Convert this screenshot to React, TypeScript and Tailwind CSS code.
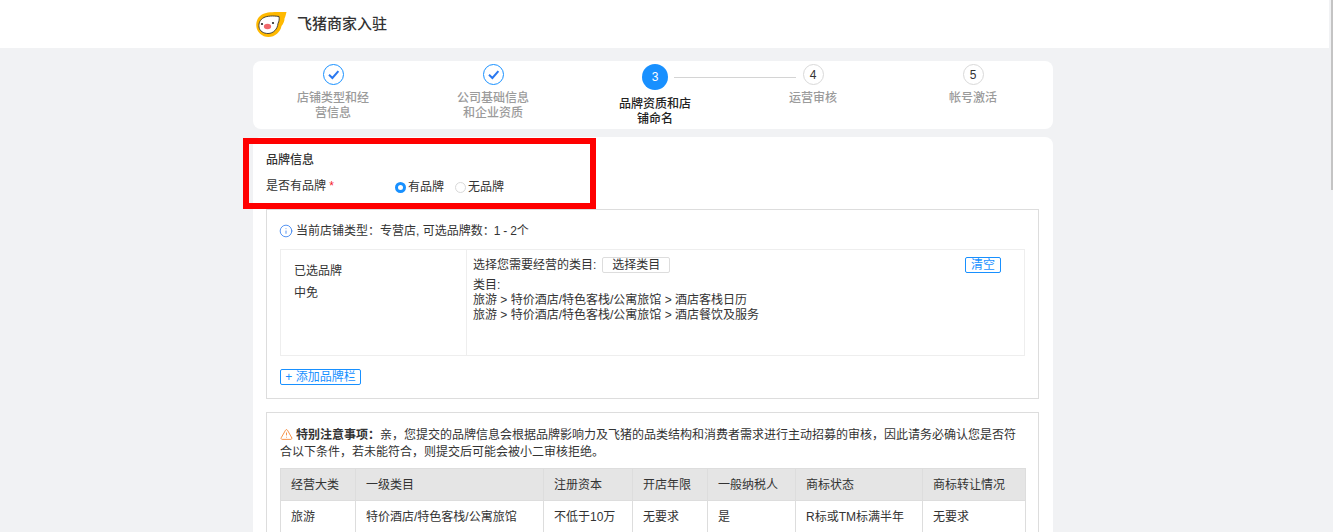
import { Info, TriangleAlert } from 'lucide-react'

const steps = [
  { label: '店铺类型和经营信息', done: true },
  { label: '公司基础信息和企业资质', done: true },
  { label: '品牌资质和店铺命名', active: true, num: 3 },
  { label: '运营审核', num: 4 },
  { label: '帐号激活', num: 5 },
]

const columns = [
  { title: '经营大类', value: '旅游', width: 'w-[75px]' },
  { title: '一级类目', value: '特价酒店/特色客栈/公寓旅馆', width: 'w-[188px]' },
  { title: '注册资本', value: '不低于10万', width: 'w-[89px]' },
  { title: '开店年限', value: '无要求', width: 'w-[75px]' },
  { title: '一般纳税人', value: '是', width: 'w-[88px]' },
  { title: '商标状态', value: 'R标或TM标满半年', width: 'w-[127px]' },
  { title: '商标转让情况', value: '无要求', width: 'w-[103px]' },
]

function Logo() {
  return (
    <svg width="31" height="27" viewBox="0 0 31 27" fill="none">
      <path d="M30.5 1 C 22 1 12 0.5 7 3 C 2 5.5 0 10 0.3 15 C 0.7 21 6 26 12.5 26 C 19 26 24.5 21 25.5 15 C 27.5 12.5 28.5 10 28.5 7.5 C 29.5 5.5 30 3 30.5 1 Z" fill="#ffb900" />
      <path d="M23 5.5 C 17 4.5 11 5 8 6.5 C 4 8.5 2.5 12 3 16 C 3.5 20 7.5 22.5 12 22.5 C 17.5 22.5 21.5 18 22 12.5 C 23 10.5 23.5 8 23 5.5 Z" fill="#fff" stroke="#333" strokeWidth="0.9" />
      <ellipse cx="11.5" cy="15.5" rx="3.6" ry="2.8" fill="#f0686c" />
      <circle cx="6" cy="13" r="1.1" fill="#222" />
      <circle cx="17" cy="12" r="1.1" fill="#222" />
    </svg>
  )
}

function StepDot({ step }: { step: (typeof steps)[number] }) {
  if (step.done) {
    return (
      <svg width="21" height="21" viewBox="0 0 21 21" fill="none" className="shrink-0">
        <circle cx="10.5" cy="10.5" r="10" stroke="#1890ff" />
        <path d="M6 10.8 L9.4 14 L15.4 7.2" stroke="#2a78f0" strokeWidth="2" />
      </svg>
    )
  }
  if (step.active) {
    return (
      <div className="w-[26px] h-[26px] rounded-full bg-[#1890ff] text-white text-[12px] flex items-center justify-center shrink-0">
        {step.num}
      </div>
    )
  }
  return (
    <div className="w-[21px] h-[21px] rounded-full border border-[#d9d9d9] bg-white text-[#333] text-[12px] flex items-center justify-center shrink-0">
      {step.num}
    </div>
  )
}

export default function App() {
  return (
    <div
      className="h-[532px] w-[1333px] overflow-hidden flex bg-[#f1f2f4] text-[#333] text-[12px]"
      style={{ fontFamily: '"Liberation Sans", "Noto Sans CJK SC", sans-serif' }}
    >
      <div className="w-[1329px] shrink-0">
        <header className="h-[48px] bg-white">
          <div className="w-[800px] ml-[253px] h-full flex items-center pl-[3px]">
            <Logo />
            <span className="ml-[10px] text-[15px] font-medium text-[#333]">飞猪商家入驻</span>
          </div>
        </header>

        <div className="relative w-[800px] ml-[253px] pt-[13px]">
          {/* 步骤条 */}
          <div className="h-[68px] bg-white rounded-lg flex pt-[3px]">
            {steps.map((step, i) => (
              <div key={i} className={`w-[160px] relative flex flex-col items-center ${step.active ? 'pl-[4px]' : ''}`}>
                <StepDot step={step} />
                {step.active && <div className="absolute left-[101px] top-[13px] w-[122px] h-px bg-[#d4d4d4]" />}
                <p
                  className={`w-[76px] text-center leading-[15px] font-medium ${step.active ? 'mt-[7px] text-[#222]' : 'mt-[6px] text-[#9b9b9b]'}`}
                >
                  {step.label}
                </p>
              </div>
            ))}
          </div>

          {/* 品牌信息 */}
          <div className="mt-[8px] bg-white rounded-lg pt-[15px] px-[13px]">
            <h2 className="text-[12px] leading-[16px] font-medium text-[#333]">品牌信息</h2>
            <div className="mt-[10px] h-[16px] flex items-center">
              <span className="w-[129px]">
                是否有品牌 <span className="text-[#f5222d]">*</span>
              </span>
              <span className="w-[11px] h-[11px] rounded-full border-[3px] border-[#1890ff] bg-white mr-[2px] translate-y-[1px]" />
              <span className="mr-[11px] translate-y-[1px]">有品牌</span>
              <span className="w-[11px] h-[11px] rounded-full border border-[#d9d9d9] bg-white mr-[2px] translate-y-[1px]" />
              <span className="translate-y-[1px]">无品牌</span>
            </div>

            <div className="mt-[15px] w-[773px] h-[190px] border border-[#ddd] px-[13px] pt-[13px]">
              <div className="h-[16px] flex items-center">
                <Info size={14} strokeWidth={1.5} className="text-[#3f86f0] -ml-[1px]" />
                <span className="ml-[3px] whitespace-pre">当前店铺类型：专营店, 可选品牌数：<span className="tracking-[-0.2px] -ml-[1px]">1 - 2</span>个</span>
              </div>
              <div className="mt-[10px] w-[745px] h-[107px] border border-[#eee] flex">
                <div className="w-[186px] border-r border-[#eee] pl-[13px] pt-[10px] leading-[22px]">
                  <p>已选品牌</p>
                  <p>中免</p>
                </div>
                <div className="flex-1 pl-[6px] pr-[23px] pt-[7px]">
                  <div className="flex items-center h-[16px]">
                    <span>选择您需要经营的类目:</span>
                    <button className="ml-[6px] w-[68px] h-[16px] border border-[#ddd] rounded-[2px] text-[12px] leading-none">选择类目</button>
                    <button className="ml-auto w-[36px] h-[16px] border border-[#1890ff] rounded-[2px] text-[#1890ff] text-[12px] leading-none">清空</button>
                  </div>
                  <div className="mt-[5px] leading-[15px]">
                    <p>类目:</p>
                    <p>旅游 &gt; 特价酒店/特色客栈/公寓旅馆 &gt; 酒店客栈日历</p>
                    <p>旅游 &gt; 特价酒店/特色客栈/公寓旅馆 &gt; 酒店餐饮及服务</p>
                  </div>
                </div>
              </div>
              <button className="mt-[13px] block w-[81px] h-[16px] border border-[#1890ff] rounded-[2px] text-[#1890ff] text-[12px] leading-none">+ 添加品牌栏</button>
            </div>

            <div className="mt-[13px] w-[773px] border border-[#ddd] px-[13px] pt-[14px] pb-[20px]">
              <div className="leading-[16.5px]">
                <p className="whitespace-nowrap">
                  <TriangleAlert size={13} strokeWidth={1.7} className="inline-block text-[#f58a3c] align-[-2px] mr-[3px]" />
                  <b className="font-bold">特别注意事项：</b>
                  <span>亲，您提交的品牌信息会根据品牌影响力及飞猪的品类结构和消费者需求进行主动招募的审核，因此请务必确认您是否符</span>
                </p>
                <p>合以下条件，若未能符合，则提交后可能会被小二审核拒绝。</p>
              </div>
              <table className="mt-[8px] w-[745px] border-collapse table-fixed">
                <thead>
                  <tr className="bg-[#e5e5e5] h-[32px]">
                    {columns.map(c => (
                      <th key={c.title} className={`${c.width} border border-[#ddd] pl-[10px] text-left font-normal`}>{c.title}</th>
                    ))}
                  </tr>
                </thead>
                <tbody>
                  <tr className="h-[32px]">
                    {columns.map(c => (
                      <td key={c.title} className="border border-[#ddd] pl-[10px]">{c.value}</td>
                    ))}
                  </tr>
                </tbody>
              </table>
            </div>
          </div>

          {/* 标注框 */}
          <div className="absolute left-[-10px] top-[90px] w-[353px] h-[71px] border-[6px] border-[#ff0000]" />
        </div>
      </div>

      <div className="flex-1 pl-[2px]">
        <div className="w-[2px] h-[190px] bg-[#c4c4c4]" />
      </div>
    </div>
  )
}
